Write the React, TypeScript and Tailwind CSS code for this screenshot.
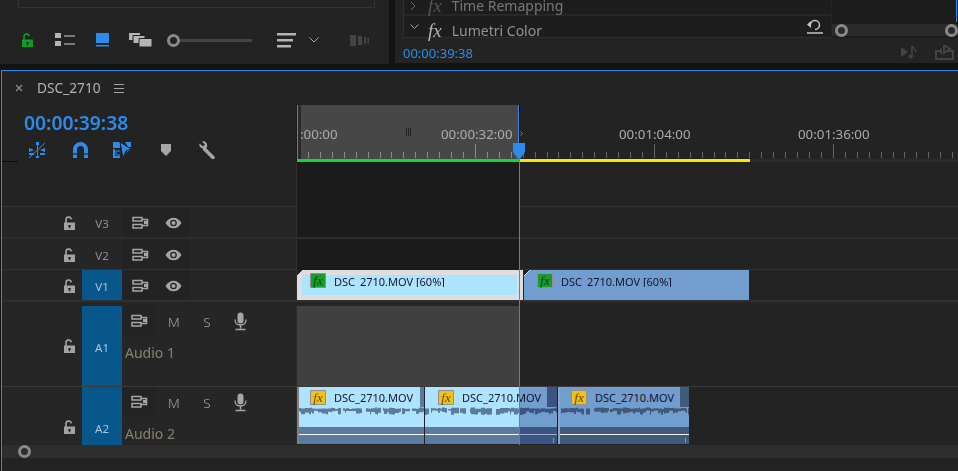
import React from 'react';

const BLUE = '#2d8ceb';

function LockOpen({ color = '#a3a3a3', className = '' }: { color?: string; className?: string }) {
  return (
    <svg width="13" height="14" viewBox="0 0 13 14" className={className}>
      <path d="M3 7V4a2.6 2.6 0 0 1 5.2-.6" fill="none" stroke={color} strokeWidth="1.6" />
      <path d="M1 6.5h11V14H1z" fill={color} />
      <path d="M5.3 9h2.4v1.4l-.5.4v1.4H5.8v-1.4l-.5-.4z" fill="#222" />
    </svg>
  );
}

function SyncToggle() {
  return (
    <svg width="17" height="14" viewBox="0 0 17 14">
      <path d="M1 1.5h9v3.5H1zM1 8.500h9V12H1zM10 3.500h5.500v6H10" fill="none" stroke="#a6a6a6" strokeWidth="1.5" />
      <path d="M12 5h4v3h-4z" fill="#a6a6a6" />
    </svg>
  );
}

function Eye() {
  return (
    <svg width="17" height="12" viewBox="0 0 17 12">
      <path d="M.5 6C3 2 5.600.7 8.500.7S14 2 16.500 6C14 10 11.400 11.300 8.500 11.300S3 10 .5 6z" fill="#a6a6a6" />
      <circle cx="8.500" cy="6" r="3.300" fill="#232323" />
      <circle cx="8.500" cy="6" r="2" fill="#a6a6a6" />
    </svg>
  );
}

function Mic() {
  return (
    <svg width="13" height="19" viewBox="0 0 13 19">
      <rect x="3.500" y="0.500" width="6" height="11" rx="3" fill="#a6a6a6" />
      <path d="M1 7.500c0 3.500 2.200 5.500 5.500 5.500S12 11 12 7.500" fill="none" stroke="#a6a6a6" strokeWidth="1.300" />
      <path d="M6.500 13v3.500M1.500 17.500h10" stroke="#a6a6a6" strokeWidth="1.400" />
    </svg>
  );
}

function Ring({ className = '' }: { className?: string }) {
  return <div className={`w-[13px] h-[13px] rounded-full border-[3px] border-[#8a8a8a] shrink-0 ${className}`} />;
}

function wavePath(width: number, seed: number) {
  let s = seed;
  const next = () => {
    s = (s * 9301 + 49297) % 233280;
    return s / 233280;
  };
  let top = 'M0 1';
  let bottom = '';
  let x = 0;
  while (x < width) {
    const w = 1 + Math.floor(next() * 4);
    const gap = next() < 0.1;
    const t = gap ? 7 : 0.5 + next() * 1.5;
    const b = gap ? 7 : 3.5 + next() * 4.5;
    top += `L${x} ${t}L${x + w} ${t}`;
    bottom = `L${x + w} ${b}L${x} ${b}` + bottom;
    x += w;
  }
  return `${top}${bottom}Z`;
}

function FxBadge({ green = false, className = '' }: { green?: boolean; className?: string }) {
  return (
    <div
      className={`w-[16px] h-[15px] shrink-0 border border-[#8d9296] flex items-center justify-center font-['Liberation_Serif',serif] italic text-[13px] leading-none ${
        green ? 'bg-[#1a9b2b] text-[#0c4a14]' : 'bg-[#f4c20d] text-[#5a4a10]'
      } ${className}`}
    >
      fx
    </div>
  );
}

function Corner({ tint = '#dcdcdc' }: { tint?: string }) {
  return (
    <svg width="6" height="6" viewBox="0 0 6 6" className="absolute left-0 top-0">
      <path d="M0 0h6L0 6z" fill="#222" />
      <path d="M0 6L6 0" stroke={tint} strokeWidth="1" />
    </svg>
  );
}

function VideoClip({ selected = false }: { selected?: boolean }) {
  return (
    <div
      className={`relative h-[30px] shrink-0 ${
        selected ? 'w-[226px] bg-[#dedede] pl-[5px] pr-[6px] py-[5px]' : 'w-[225px] bg-[#729dcf] py-[5px]'
      }`}
    >
      <Corner />
      <div className={`h-[20px] flex items-start ${selected ? 'bg-[#ade3fe] pl-[8px]' : 'pl-[13px]'}`}>
        <FxBadge green className="-mt-[2px]" />
        <span className="ml-[8px] h-[12px] overflow-hidden text-[11px] leading-[14px] text-[#17122e] whitespace-nowrap">
          DSC_2710.MOV [60%]
        </span>
      </div>
    </div>
  );
}

function AudioClip({
  width,
  tabEnd,
  seed,
  dark = false,
  dimFrom,
  edge = '',
  tick = false,
}: {
  width: number;
  tabEnd: number;
  seed: number;
  dark?: boolean;
  dimFrom?: number;
  edge?: string;
  tick?: boolean;
}) {
  const light = dark ? 'bg-[#729dcf]' : 'bg-[#ade3fe]';
  const shade = dark ? 'bg-[#3f5a7a]' : 'bg-[#5a7a9f]';
  return (
    <div className="relative h-[57px] shrink-0 flex flex-col overflow-hidden" style={{ width }}>
      <div className={`h-[20px] flex ${shade}`}>
        <div className={`flex items-center pl-[13px] pt-[1px] ${light}`} style={{ width: tabEnd }}>
          <FxBadge />
          <span className="ml-[8px] text-[11px] leading-none text-[#17122e] whitespace-nowrap">DSC_2710.MOV</span>
        </div>
      </div>
      <div className={`h-[20px] ${light}`}>
        <svg width={width} height="12" className="block">
          <path d={wavePath(width, seed)} fill={dark ? '#3f5a7a' : '#5a7a9f'} />
        </svg>
      </div>
      <div className={`h-[7px] ${shade}`} />
      <div className="h-px bg-[#f5f5f5]" />
      <div className={`flex-1 ${shade}`} />
      {dimFrom !== undefined && (
        <div className="absolute top-0 bottom-0 right-0 bg-[#a8b0d0] mix-blend-multiply" style={{ left: dimFrom }} />
      )}
      {tick && <div className="absolute right-[3px] bottom-[1px] h-[5px] w-px bg-[#729dcf]" />}
      {edge && <div className={`absolute left-0 top-0 bottom-0 w-[2px] ${edge}`} />}
    </div>
  );
}

function Ruler() {
  const ticks = Array.from({ length: 56 }, (_, i) => i);
  return (
    <div className="relative flex-1 h-[57px] flex bg-[#232323]">
      <div className="w-px h-[55px] bg-[#2d8ceb]" />
      <div className="w-[3px] h-[54px] bg-[#2a2a2a]" />
      <div className="w-[217px] h-[54px] bg-[#474747]" />
      <div className="w-[1px] h-[54px] bg-[#2d8ceb]" />
      <div className="w-[1px] h-[54px] bg-[#0c0c0c]" />
      <svg width="661" height="53" className="absolute left-0 top-0">
        {ticks.slice(1).map((i) => {
          const x = Math.round(i * 11.93) - 0.5;
          const major = i % 15 === 0;
          return (
            <line
              key={i}
              x1={x}
              x2={x}
              y1={major ? 39 : 47}
              y2="53"
              stroke={x < 222 ? '#8c8c8c' : '#636363'}
              strokeWidth="1"
            />
          );
        })}
      </svg>
      <div className="absolute left-0 top-[26px] w-px h-[3px] bg-[#b0703a]" />
      <span className="absolute left-[3px] top-[21px] text-[13.300px] leading-[17px] text-[#a9adb0]">:00:00</span>
      <div className="absolute left-[109px] top-[23px] h-[8px] flex gap-px">
        <div className="w-px bg-[#222]" />
        <div className="w-px bg-[#222]" />
        <div className="w-px bg-[#222]" />
      </div>
      <span className="absolute left-[144px] top-[21px] text-[13.300px] leading-[17px] text-[#a9adb0]">00:00:32:00</span>
      <span className="absolute left-[322px] top-[21px] text-[13.300px] leading-[17px] text-[#a9adb0]">00:01:04:00</span>
      <span className="absolute left-[501px] top-[21px] text-[13.300px] leading-[17px] text-[#a9adb0]">00:01:36:00</span>
      <div className="absolute left-0 right-0 top-[54px] h-[3px] bg-[#2a2a2a] flex">
        <div className="w-[222px] bg-[#12d83e]" />
        <div className="w-[231px] bg-[#fbe60a]" />
      </div>
    </div>
  );
}

function VideoTrack({
  label,
  active = false,
  children,
}: {
  label: string;
  active?: boolean;
  children?: React.ReactNode;
}) {
  return (
    <div className="flex h-[30px]">
      <div className="w-[294px] flex items-center bg-[#262626]">
        <div className="w-[80px] h-full flex items-center justify-end pr-[6px] pt-[2px]">
          <LockOpen />
        </div>
        <div
          className={`w-[40px] h-full flex items-center justify-center pt-[4px] text-[11.500px] ${
            active ? 'bg-[#07568c] text-[#a9c6dc]' : 'text-[#8b9198]'
          }`}
        >
          {label}
        </div>
        <div className="w-[68px] h-full bg-[#232323] flex items-center pl-[10px] gap-[16px] pt-[1px]">
          <SyncToggle />
          <Eye />
        </div>
      </div>
      <div className="w-px bg-[#2e2e2e]" />
      <div className="flex-1 flex bg-[#232323]">{children}</div>
    </div>
  );
}

function AudioHeader({ label, name, height }: { label: string; name: string; height: string }) {
  return (
    <div className={`w-[294px] flex bg-[#262626] ${height}`}>
      <div className="w-[80px] flex justify-end pr-[6px] pt-[33px]">
        <LockOpen />
      </div>
      <div className="w-[40px] bg-[#07568c] flex justify-center pt-[34px] text-[11.500px] leading-[16px] text-[#a9c6dc]">
        {label}
      </div>
      <div className="flex-1">
        <div className="flex items-center h-[30px]">
          <div className="w-[34px] h-[30px] bg-[#232323] flex items-center justify-center">
            <SyncToggle />
          </div>
          <span className="ml-[7px] w-[22px] pt-[2px] text-center text-[13.500px] font-light text-[#a6a6a6]">M</span>
          <span className="ml-[11px] w-[22px] pt-[2px] text-center text-[13.500px] font-light text-[#a6a6a6]">S</span>
          <div className="ml-[16px]">
            <Mic />
          </div>
        </div>
        <div className="pl-[3px] mt-[8px] text-[14px] leading-[18px] text-[#8a8275]">{name}</div>
      </div>
    </div>
  );
}

export default function App() {
  return (
    <div className="relative w-[958px] h-[471px] overflow-hidden bg-[#131313] font-['Noto_Sans',sans-serif]">
      {/* upper panels */}
      <div className="flex h-[70px]">
        <div className="w-[389px] h-[64px] bg-[#232323] flex flex-col">
          <div className="mx-[18px] w-[357px] h-[8px] border-b border-x border-[#333]" />
          <div className="flex items-center h-[26px] mt-[19px] pl-[21px]">
            <LockOpen color="#0f9d1f" />
            <svg width="20" height="14" viewBox="0 0 20 14" className="ml-[21px]">
              <path d="M0 0h6v5H0zM0 8h6v5H0z" fill="#b5b5b5" />
              <path d="M9 3h11M9 11h11" stroke="#999" strokeWidth="1.300" />
            </svg>
            <svg width="13" height="14" viewBox="0 0 13 14" className="ml-[21px]">
              <path d="M0 0h13v10H0z" fill={BLUE} />
              <path d="M0 12h13v1.500H0z" fill={BLUE} />
            </svg>
            <svg width="23" height="14" viewBox="0 0 23 14" className="ml-[20px]">
              <path d="M0 0h11v7H0z" fill="#b5b5b5" />
              <path d="M4 2.500h12v8H4z" fill="#b5b5b5" stroke="#232323" />
              <path d="M10 5.500h13V14H10z" fill="#b5b5b5" stroke="#232323" />
            </svg>
            <Ring className="ml-[15px]" />
            <div className="w-[72px] h-[3px] bg-[#444]" />
            <svg width="19" height="15" viewBox="0 0 19 15" className="ml-[25px]">
              <path d="M0 0h19v2.500H0zM0 6h16v2.500H0zM0 12h14v2.500H0z" fill="#b5b5b5" />
            </svg>
            <svg width="10" height="6" viewBox="0 0 10 6" className="ml-[13px]">
              <path d="M.5.500L5 5 9.500.500" fill="none" stroke="#a6a6a6" />
            </svg>
            <svg width="19" height="11" viewBox="0 0 19 11" className="ml-[31px]">
              <path d="M0 0h6v11H0zM8 1h4v9H8zM14 2h2v7h-2zM17.500 2.500h1.500v6h-1.500z" fill="#444" />
            </svg>
          </div>
        </div>
        <div className="w-[6px]" />
        <div className="flex-1 h-[63px] bg-[#232323] flex flex-col">
          <div className="flex h-[38px]">
            <div className="ml-[8px] w-[428px] flex flex-col border-l border-b border-[#2e2e2e] bg-[#1d1d1d]">
              <div className="h-[16px] flex items-start border-b-2 border-[#272727]">
                <div className="h-[14px] -mt-[1px] flex items-center">
                  <svg width="8" height="8" viewBox="0 0 8 8" className="ml-[6px]">
                    <path d="M1 0l4 4-4 4" fill="none" stroke="#666" />
                  </svg>
                  <span className="ml-[10px] font-['Liberation_Serif',serif] italic text-[19px] leading-[14px] text-[#555]">fx</span>
                  <span className="ml-[10px] text-[14px] leading-[14px] text-[#777]">Time Remapping</span>
                </div>
              </div>
              <div className="h-[21px] flex items-start pt-[7px] relative">
                <svg width="9" height="6" viewBox="0 0 9 6" className="ml-[6px] mt-[1px]">
                  <path d="M.5.500l4 4 4-4" fill="none" stroke="#a6a6a6" />
                </svg>
                <span className="ml-[9px] font-['Liberation_Serif',serif] italic text-[19px] leading-[16px] text-[#b5b5b5]">fx</span>
                <span className="ml-[10px] text-[14px] leading-[16px] text-[#8f949a]">Lumetri Color</span>
                <svg width="16" height="16" viewBox="0 0 16 16" className="absolute right-[8px] top-[3px]">
                  <path d="M3.500 5.500a4.500 4.500 0 1 1 4.500 5" fill="none" stroke="#c4c4c4" strokeWidth="1.500" />
                  <path d="M0 5.500l4-3.500v7z" fill="#c4c4c4" />
                  <path d="M0 14h16" stroke="#c4c4c4" strokeWidth="1.500" />
                </svg>
              </div>
            </div>
            <div className="relative flex-1 bg-[#1d1d1d] ml-px">
              <div className="absolute right-[1px] top-0 h-[22px] w-px bg-[#2d8ceb]" />
              <div className="absolute left-0 right-0 top-[24px] h-[12px] bg-[#2b2b2b] flex items-center justify-between pl-[3px]">
                <Ring />
                <Ring />
              </div>
            </div>
          </div>
          <div className="flex items-center h-[25px] pl-[8px]">
            <span className="text-[13px] pt-[6px] text-[#2d8ceb]">00:00:39:38</span>
            <svg width="18" height="14" viewBox="0 0 18 14" className="ml-auto mt-[3px]">
              <path d="M0 2l7 5-7 5z" fill="#444" />
              <path d="M11 12V1c1 2 4 3 4 6" fill="none" stroke="#444" strokeWidth="1.500" />
              <circle cx="9.500" cy="11.500" r="2" fill="#444" />
            </svg>
            <svg width="19" height="15" viewBox="0 0 19 15" className="ml-[16px] mr-[4px] mt-[3px]">
              <path d="M5 6H1v8h17V6h-5M6 9V3.500M9 0v8l6-4z" fill="none" stroke="#444" strokeWidth="2" />
            </svg>
          </div>
        </div>
      </div>

      {/* timeline */}
      <div className="ml-px h-[401px] border-t border-l border-[#2d8ceb] bg-[#232323] flex flex-col relative">
        <div className="h-[34px] flex items-center pl-[13px]">
          <svg width="8" height="8" viewBox="0 0 8 8">
            <path d="M1 1l6 6M7 1L1 7" stroke="#8f8f8f" strokeWidth="1.200" />
          </svg>
          <span className="ml-[14px] text-[13.700px] text-[#b3b3b3]">DSC_2710</span>
          <svg width="10" height="9" viewBox="0 0 10 9" className="ml-[13px]">
            <path d="M0 .500h10M0 4.500h10M0 8.500h10" stroke="#a6a6a6" strokeWidth="1.200" />
          </svg>
        </div>

        <div className="flex h-[57px]">
          <div className="w-[294px] flex flex-col">
            <div className="pl-[22px] pt-[6px] text-[19.300px] leading-[24px] font-semibold text-[#2d8ceb]">00:00:39:38</div>
            <div className="flex items-center pl-[26px] mt-[6px]">
              <svg width="18" height="17" viewBox="0 0 18 17">
                <path d="M1 16L17 1" stroke={BLUE} strokeWidth="1" />
                <path d="M8 0h3v3H8zM9 3h1v11H9zM1 6l5 2-5 2zM17 6l-5 2 5 2zM1 11h5v2H1zM12 11h5v2h-5zM8 14h3v2H8z" fill={BLUE} />
              </svg>
              <svg width="15" height="16" viewBox="0 0 15 16" className="ml-[27px]">
                <path d="M0 16V7.500a7.500 7.500 0 0 1 15 0V16h-4V7.500a3.500 3.500 0 0 0-7 0V16z" fill={BLUE} />
                <path d="M0 11h4v2H0zM11 11h4v2h-4z" fill="#1b4f86" />
              </svg>
              <svg width="18" height="17" viewBox="0 0 18 17" className="ml-[25px]">
                <path d="M0 0h7v6H0zM0 7h2v9H0zM2 14h5v2H2zM12 0h6v5h-3zM13 11l5-4v-1l-2 0z" fill={BLUE} />
                <path d="M7 0l11 7-5 2-3 7z" fill={BLUE} stroke="#232323" />
                <path d="M3 9h4M3 9v4h4" fill="none" stroke={BLUE} />
              </svg>
              <svg width="10" height="12" viewBox="0 0 10 12" className="ml-[30px]">
                <path d="M0 0h10v7l-5 5-5-5z" fill="#a6a6a6" />
              </svg>
              <svg width="18" height="18" viewBox="0 0 18 18" className="ml-[28px]">
                <path d="M5.500 8L14 16.500" stroke="#a6a6a6" strokeWidth="3.500" strokeLinecap="round" />
                <path d="M.5 2.500L4 5.500 6 3.500 3 .5C6-.500 9 2 8 6L6.500 8.500 2.500 7C.5 6 0 4 .5 2.500z" fill="#a6a6a6" />
              </svg>
            </div>
            <div className="mt-auto w-[16px] h-px bg-[#0c0c0c]" />
          </div>
          <div className="w-px bg-[#1a1a1a]" />
          <Ruler />
        </div>

        <div className="flex h-[44px]">
          <div className="w-[294px] bg-[#232323]" />
          <div className="w-px bg-[#2e2e2e]" />
          <div className="w-[222px] bg-[#1b1b1b]" />
        </div>
        <div className="h-px bg-[#333] flex">
          <div className="w-[295px]" />
          <div className="w-[222px] bg-[#1b1b1b]" />
        </div>
        <VideoTrack label="V3">
          <div className="w-[222px] bg-[#1b1b1b]" />
        </VideoTrack>
        <div className="h-[2px] bg-[#2d2d2d]" />
        <VideoTrack label="V2">
          <div className="w-[222px] bg-[#1b1b1b]" />
        </VideoTrack>
        <div className="h-px bg-[#333] flex">
          <div className="w-[295px]" />
          <div className="w-[222px] bg-[#1b1b1b]" />
        </div>
        <VideoTrack label="V1" active>
          <VideoClip selected />
          <div className="w-px" />
          <VideoClip />
        </VideoTrack>
        <div className="h-[2px] bg-[#2f2f2f]" />
        <div className="h-[4px] bg-[#252525]" />

        <div className="flex h-[80px]">
          <AudioHeader label="A1" name="Audio 1" height="h-[80px]" />
          <div className="w-px bg-[#2e2e2e]" />
          <div className="flex-1 flex bg-[#232323]">
            <div className="w-[222px] bg-[#404040]" />
          </div>
        </div>
        <div className="h-px bg-[#3a3a3a]" />
        <div className="flex h-[58px] overflow-hidden">
          <AudioHeader label="A2" name="Audio 2" height="h-[58px]" />
          <div className="w-px bg-[#2e2e2e]" />
          <div className="flex-1 flex bg-[#232323]">
            <AudioClip width={127} tabEnd={123} seed={11} edge="bg-[#808080]" />
            <div className="w-px bg-[#222]" />
            <AudioClip width={132} tabEnd={122} seed={29} dimFrom={95} tick />
            <div className="w-px bg-[#222]" />
            <AudioClip width={131} tabEnd={122} seed={47} dark edge="bg-[#8fa5c0]" tick />
          </div>
        </div>

        <div className="h-[13px] bg-[#2e2e2e] flex items-center pl-[16px] mt-auto">
          <Ring />
        </div>
        <div className="h-[13px]" />

        {/* playhead */}
        <div className="absolute left-[517px] top-[72px] h-[302px] w-px bg-[#2d8ceb]" />
        <div className="absolute left-[510px] top-[72px]">
          <svg width="14" height="16" viewBox="0 0 14 16" className="block">
            <path d="M1 0h12v9l-5 7H6L1 9z" fill={BLUE} />
          </svg>
        </div>
        <svg width="4" height="5" viewBox="0 0 4 5" className="absolute left-[518px] top-[60px]">
          <path d="M.5.500l2 2-2 2" fill="none" stroke={BLUE} />
        </svg>
      </div>
    </div>
  );
}
